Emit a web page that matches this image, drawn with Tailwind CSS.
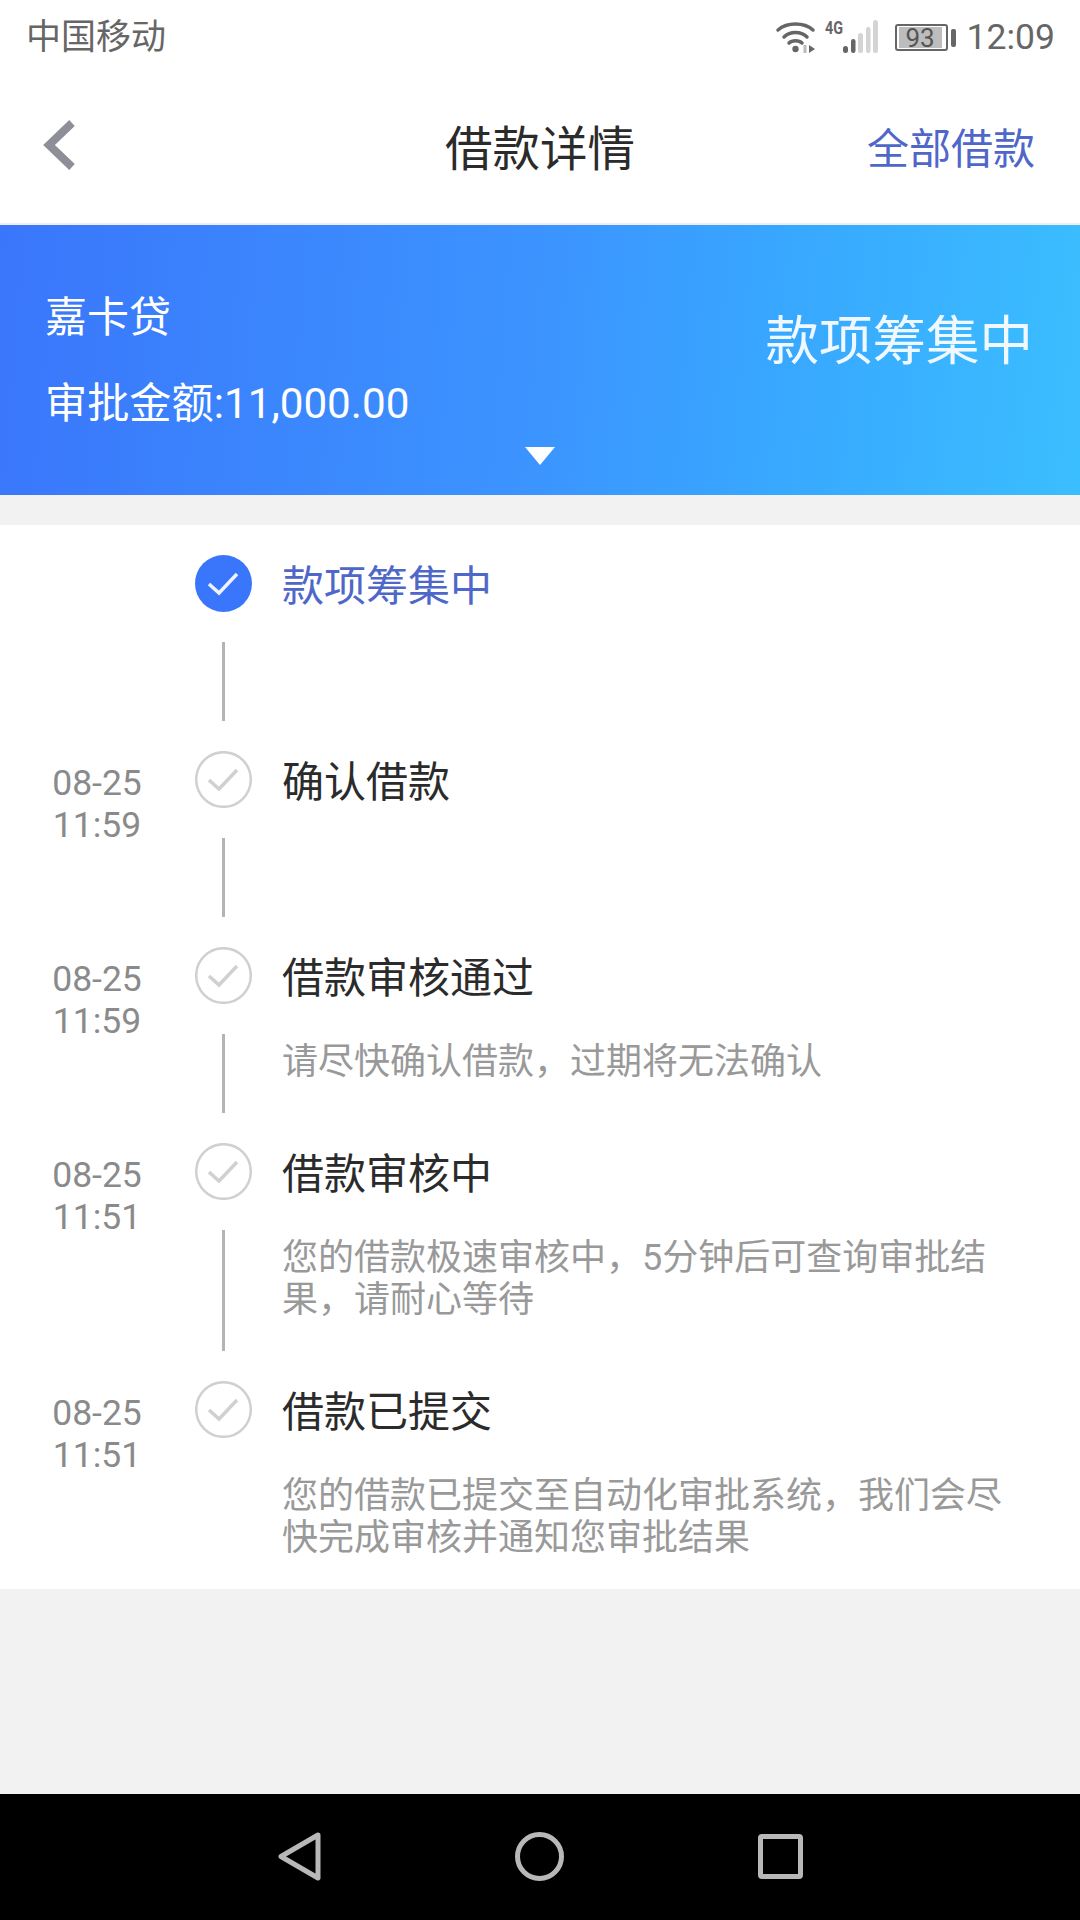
<!DOCTYPE html>
<html lang="zh">
<head>
<meta charset="utf-8">
<script src="https://cdn.jsdelivr.net/npm/@tailwindcss/browser@4"></script>
</head>
<body class="m-0">
<div class="w-[1080px] h-[1920px] flex flex-col bg-[#f2f2f2] overflow-hidden font-['Roboto','Noto_Sans_CJK_SC',sans-serif]">
  <!-- status bar -->
  <div class="h-[75px] bg-white flex items-center justify-between pl-[26px] pr-[25px] text-[#666666]">
    <span class="text-[35px] leading-none">中国移动</span>
    <div class="flex items-center h-full">
      <svg width="104" height="36" viewBox="0 0 104 36" fill="none" class="mb-[2px] overflow-visible">
        <path d="M3 11 C12 3 29 3 38 11" stroke="#666" stroke-width="3.500" stroke-linecap="round"/>
        <path d="M9 18 C15 12 26 12 32 18" stroke="#666" stroke-width="3.500" stroke-linecap="round"/>
        <path d="M14 24 C17 21 24 21 27 24" stroke="#666" stroke-width="3.500" stroke-linecap="round"/>
        <circle cx="20.500" cy="30" r="3.200" fill="#666"/>
        <path d="M34 26v8l6-4z" fill="#666"/>
        <path d="M30 26v8" stroke="#bbb" stroke-width="3"/>
        <text x="50" y="15" font-size="19" font-weight="700" fill="#666" textLength="18" lengthAdjust="spacingAndGlyphs" font-family="Roboto">4G</text>
        <rect x="68" y="27" width="5" height="7" rx="2.500" fill="#666"/>
        <rect x="76" y="20" width="4.500" height="14" rx="2.200" fill="#666"/>
        <rect x="83" y="14" width="5" height="20" rx="2.500" fill="#d4d4d4"/>
        <rect x="91" y="8" width="4.500" height="26" rx="2.200" fill="#d4d4d4"/>
        <rect x="98" y="1" width="5" height="33" rx="2.500" fill="#d4d4d4"/>
      </svg>
      <div class="relative w-[53px] h-[27px] ml-[16px] rounded-[3px] border-[2px] border-[#666666] px-[2px] py-[1px]">
        <div class="w-[43px] h-full bg-[#bdbdbd] flex items-center justify-center text-[26px] leading-none text-[#555555]">93</div>
      </div>
      <div class="w-[5px] h-[18px] ml-[3px] rounded-[2px] bg-[#666666]"></div>
      <span class="ml-[11px] text-[35.500px] leading-none text-[#666666]">12:09</span>
    </div>
  </div>
  <!-- nav -->
  <div class="relative h-[150px] bg-white border-b-[2px] border-[#eeeeee] flex items-center justify-between pl-[43px] pr-[45px]">
    <svg width="34" height="52" viewBox="0 0 34 52" fill="none" class="mb-[8px]"><path d="M29 4 L6 26 L29 48" stroke="#8e8e99" stroke-width="8"/></svg>
    <span class="absolute left-0 right-0 text-center text-[47.500px] leading-none text-[#2b2b2b] pt-[3px]">借款详情</span>
    <span class="text-[42px] leading-none text-[#4f67c9] mt-[1px]">全部借款</span>
  </div>
  <!-- hero -->
  <div class="relative h-[270px] bg-[linear-gradient(95deg,#3a76fb,#3c94ff_50%,#38a6ff_70%,#3bbeff)] flex justify-between text-white pl-[45px] pr-[47px]">
    <div class="flex flex-col">
      <span class="mt-[68px] text-[42px] leading-[50px]">嘉卡贷</span>
      <span class="mt-[36px] text-[42.200px] leading-[50px]">审批金额:11,000.00</span>
    </div>
    <span class="mt-[87px] text-[53.500px] leading-[60px] text-[#f0f8ff]">款项筹集中</span>
    <div class="absolute left-[525px] top-[222px] w-0 h-0 border-l-[15px] border-r-[15px] border-t-[18px] border-l-transparent border-r-transparent border-t-white"></div>
  </div>
  <!-- timeline -->
  <div class="mt-[30px] bg-white pt-[30px] pb-[30px] flex flex-col">
    <div class="flex">
      <div class="w-[195px]"></div>
      <div class="w-[57px] flex flex-col items-center">
        <svg width="57" height="57" viewBox="0 0 57 57" fill="none"><circle cx="28.500" cy="28.500" r="28.500" fill="#3a76fb"/><path d="M14 29 L24 38 L42 19" stroke="#eef4ff" stroke-width="3.500"/></svg>
        <div class="mt-[30px] h-[79px] w-[3px] bg-[#b4b4b4]"></div>
      </div>
      <div class="ml-[30px] flex-1 pr-[70px]">
        <div class="h-[57px] pt-[6px] flex items-center text-[42px] text-[#4f67c9]">款项筹集中</div>
      </div>
    </div>
    <div class="flex mt-[30px]">
      <div class="w-[195px] pt-[11px] text-center text-[35.500px] leading-[42px] text-[#8a8a8a] pr-[1px]"><div>08-25</div><div>11:59</div></div>
      <div class="w-[57px] flex flex-col items-center">
        <svg width="57" height="57" viewBox="0 0 57 57" fill="none"><circle cx="28.500" cy="28.500" r="27.300" stroke="#d0d0d0" stroke-width="2.500"/><path d="M14 29 L24 38 L42 19" stroke="#d0d0d0" stroke-width="3.500"/></svg>
        <div class="mt-[30px] h-[79px] w-[3px] bg-[#b4b4b4]"></div>
      </div>
      <div class="ml-[30px] flex-1 pr-[70px]">
        <div class="h-[57px] pt-[6px] flex items-center text-[42px] text-[#2b2b2b]">确认借款</div>
      </div>
    </div>
    <div class="flex mt-[30px]">
      <div class="w-[195px] pt-[11px] text-center text-[35.500px] leading-[42px] text-[#8a8a8a] pr-[1px]"><div>08-25</div><div>11:59</div></div>
      <div class="w-[57px] flex flex-col items-center">
        <svg width="57" height="57" viewBox="0 0 57 57" fill="none"><circle cx="28.500" cy="28.500" r="27.300" stroke="#d0d0d0" stroke-width="2.500"/><path d="M14 29 L24 38 L42 19" stroke="#d0d0d0" stroke-width="3.500"/></svg>
        <div class="mt-[30px] h-[79px] w-[3px] bg-[#b4b4b4]"></div>
      </div>
      <div class="ml-[30px] flex-1 pr-[70px]">
        <div class="h-[57px] pt-[6px] flex items-center text-[42px] text-[#2b2b2b]">借款审核通过</div>
        <div class="mt-[37px] text-[36px] leading-[42px] text-[#999999]">请尽快确认借款，过期将无法确认</div>
      </div>
    </div>
    <div class="flex mt-[30px]">
      <div class="w-[195px] pt-[11px] text-center text-[35.500px] leading-[42px] text-[#8a8a8a] pr-[1px]"><div>08-25</div><div>11:51</div></div>
      <div class="w-[57px] flex flex-col items-center">
        <svg width="57" height="57" viewBox="0 0 57 57" fill="none"><circle cx="28.500" cy="28.500" r="27.300" stroke="#d0d0d0" stroke-width="2.500"/><path d="M14 29 L24 38 L42 19" stroke="#d0d0d0" stroke-width="3.500"/></svg>
        <div class="mt-[30px] h-[121px] w-[3px] bg-[#b4b4b4]"></div>
      </div>
      <div class="ml-[30px] flex-1 pr-[70px]">
        <div class="h-[57px] pt-[6px] flex items-center text-[42px] text-[#2b2b2b]">借款审核中</div>
        <div class="mt-[37px] text-[36px] leading-[42px] text-[#999999]">您的借款极速审核中，5分钟后可查询审批结果，请耐心等待</div>
      </div>
    </div>
    <div class="flex mt-[30px]">
      <div class="w-[195px] pt-[11px] text-center text-[35.500px] leading-[42px] text-[#8a8a8a] pr-[1px]"><div>08-25</div><div>11:51</div></div>
      <div class="w-[57px] flex flex-col items-center">
        <svg width="57" height="57" viewBox="0 0 57 57" fill="none"><circle cx="28.500" cy="28.500" r="27.300" stroke="#d0d0d0" stroke-width="2.500"/><path d="M14 29 L24 38 L42 19" stroke="#d0d0d0" stroke-width="3.500"/></svg>
      </div>
      <div class="ml-[30px] flex-1 pr-[70px]">
        <div class="h-[57px] pt-[6px] flex items-center text-[42px] text-[#2b2b2b]">借款已提交</div>
        <div class="mt-[37px] text-[36px] leading-[42px] text-[#999999]">您的借款已提交至自动化审批系统，我们会尽快完成审核并通知您审批结果</div>
      </div>
    </div>
  </div>
  <div class="flex-1"></div>
  <!-- android nav -->
  <div class="h-[126px] bg-black flex items-start pt-[38px] pl-[278px]">
    <svg width="43" height="49" viewBox="0 0 43 49" fill="none"><path d="M40 3 L3 24.500 L40 46 Z" stroke="#b8b8b8" stroke-width="5" stroke-linejoin="round"/></svg>
    <svg width="49" height="49" viewBox="0 0 49 49" fill="none" class="ml-[194px]"><circle cx="24.500" cy="24.500" r="22" stroke="#b8b8b8" stroke-width="5"/></svg>
    <div class="w-[45px] h-[45px] mt-[2px] ml-[194px] rounded-[4px] border-[5px] border-[#b8b8b8]"></div>
  </div>
</div>
</body>
</html>
